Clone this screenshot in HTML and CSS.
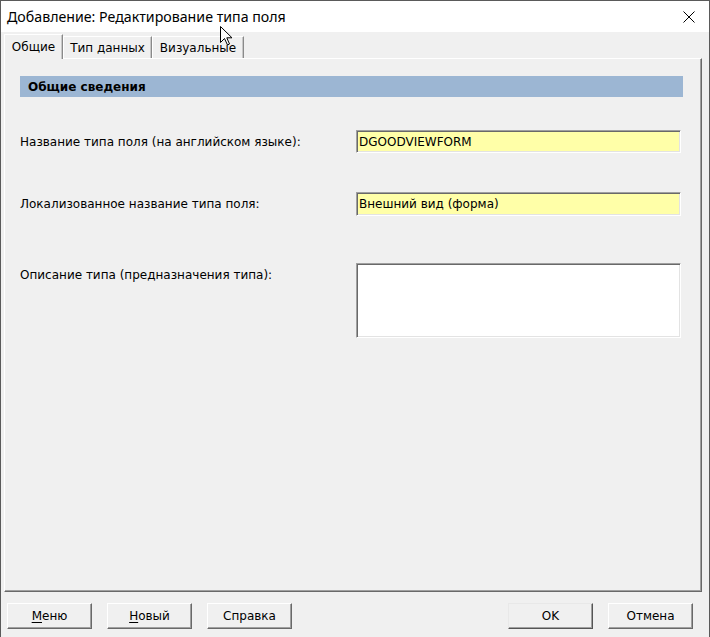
FILE: index.html
```html
<!DOCTYPE html>
<html lang="ru">
<head>
<meta charset="utf-8">
<title>Добавление: Редактирование типа поля</title>
<link rel="stylesheet" href="styles.css">
</head>
<body>
<div class="window">
  <div class="titlebar">
    <span class="title">Добавление: Редактирование типа поля</span>
    <span class="close">
      <svg width="12" height="12" viewBox="0 0 12 12"><path d="M0.5 0.5 L11.5 11.5 M11.5 0.5 L0.5 11.5" stroke="#000" stroke-width="1" fill="none"/></svg>
    </span>
  </div>
  <div class="client">
    <div class="tabs">
      <div class="tab tab-active tab-w1">Общие</div>
      <div class="tab tab-w2">Тип данных</div>
      <div class="tab tab-w3">Визуальные</div>
    </div>
    <div class="panel">
      <div class="section">Общие сведения</div>
      <div class="row row-1">
        <div class="label">Название типа поля (на английском языке):</div>
        <div class="field">DGOODVIEWFORM</div>
      </div>
      <div class="row row-2">
        <div class="label">Локализованное название типа поля:</div>
        <div class="field">Внешний вид (форма)</div>
      </div>
      <div class="row row-3">
        <div class="label label-top">Описание типа (предназначения типа):</div>
        <div class="field field-memo"></div>
      </div>
    </div>
    <div class="buttons">
      <div class="btn-group">
        <div class="btn"><u>М</u>еню</div>
        <div class="btn"><u>Н</u>овый</div>
        <div class="btn">Справка</div>
      </div>
      <div class="btn-group">
        <div class="btn btn-default">OK</div>
        <div class="btn">Отмена</div>
      </div>
    </div>
  </div>
  <svg class="cursor" width="13" height="20" viewBox="0 0 13 20"><path d="M0.5 0.5 L0.5 16.5 L4.5 12.5 L7.5 19 L9.5 18 L6.8 11.8 L12 11.8 Z" fill="#fff" stroke="#000" stroke-width="1" stroke-linejoin="miter"/></svg>
</div>
</body>
</html>
```
FILE: styles.css
```css
html, body {
  margin: 0;
  padding: 0;
  background: #f0f0f0;
}
body {
  width: 710px;
  height: 637px;
  overflow: hidden;
  font-family: "DejaVu Sans", "Liberation Sans", sans-serif;
  font-size: 12px;
  color: #000;
}
.window {
  position: relative;
  box-sizing: border-box;
  width: 710px;
  height: 637px;
  border: 1px solid #5a5a5a;
  border-bottom: none;
  background: #f0f0f0;
}
.titlebar {
  height: 31px;
  background: #fff;
  display: flex;
  align-items: center;
  justify-content: space-between;
}
.title {
  font-family: "Noto Sans", "Open Sans", sans-serif;
  font-size: 14.2px;
  padding-left: 6px;
  padding-bottom: 1px;
}
.close {
  width: 12px;
  height: 12px;
  margin-right: 14px;
  display: flex;
}
.client {
  display: flex;
  flex-direction: column;
}
.tabs {
  height: 26px;
  display: flex;
  align-items: flex-end;
  padding-left: 3px;
  position: relative;
  z-index: 2;
}
.tab {
  box-sizing: border-box;
  height: 22px;
  border-top: 1px solid #fff;
  border-left: 1px solid #fff;
  border-right: 1px solid #8a8a8a;
  box-shadow: inset -1px 0 0 #c8c8c8;
  display: flex;
  align-items: center;
  justify-content: center;
  padding-top: 1px;
}
.tab-active {
  height: 25px;
  margin-bottom: -1px;
  background: #f0f0f0;
  padding-top: 0;
  padding-bottom: 1px;
}
.tab-w1 { width: 59px; }
.tab-w2 { width: 89px; }
.tab-w3 { width: 92px; }
.panel {
  box-sizing: border-box;
  margin-left: 3px;
  width: 698px;
  height: 534px;
  border-top: 1px solid #fff;
  border-left: 1px solid #fff;
  border-right: 1px solid #696969;
  border-bottom: 1px solid #696969;
  box-shadow: inset -1px -1px 0 #a0a0a0;
  padding: 17px 0 0 15px;
  position: relative;
  z-index: 1;
}
.section {
  width: 663px;
  height: 21px;
  box-sizing: border-box;
  background: #9cb6d3;
  font-weight: bold;
  padding-left: 8px;
  display: flex;
  align-items: center;
}
.row {
  display: grid;
  grid-template-columns: 336px 325px;
  align-items: center;
}
.row-1 { margin-top: 33px; height: 23px; }
.row-2 { margin-top: 39px; height: 24px; }
.row-3 { margin-top: 47px; height: 75px; align-items: stretch; }
.label {
  white-space: nowrap;
}
.label-top {
  padding-top: 5px;
}
.field {
  box-sizing: border-box;
  height: 100%;
  background: #ffffa8;
  border-top: 1px solid #a0a0a0;
  border-left: 1px solid #a0a0a0;
  border-right: 1px solid #fff;
  border-bottom: 1px solid #fff;
  box-shadow: inset 1px 1px 0 #696969, inset -1px -1px 0 #e3e3e3;
  padding-left: 2px;
  display: flex;
  align-items: center;
  white-space: nowrap;
}
.field-memo {
  background: #fff;
}
.buttons {
  margin-top: 11px;
  display: flex;
  justify-content: space-between;
  padding: 0 16px 0 6px;
}
.btn-group {
  display: flex;
  gap: 15px;
}
.btn {
  box-sizing: border-box;
  width: 85px;
  height: 26px;
  background: #f0f0f0;
  border-top: 1px solid #fff;
  border-left: 1px solid #fff;
  border-right: 1px solid #696969;
  border-bottom: 1px solid #696969;
  box-shadow: inset -1px -1px 0 #a0a0a0;
  display: flex;
  align-items: center;
  justify-content: center;
  padding-bottom: 1px;
}
.btn u {
  text-decoration-thickness: 1px;
  text-underline-offset: 2px;
}
.btn-default {
  border-top-color: #e8e8e8;
  border-left-color: #e8e8e8;
  border-right-color: #555;
  border-bottom-color: #555;
}
.cursor {
  position: absolute;
  left: 219px;
  top: 25px;
  z-index: 5;
}
```
